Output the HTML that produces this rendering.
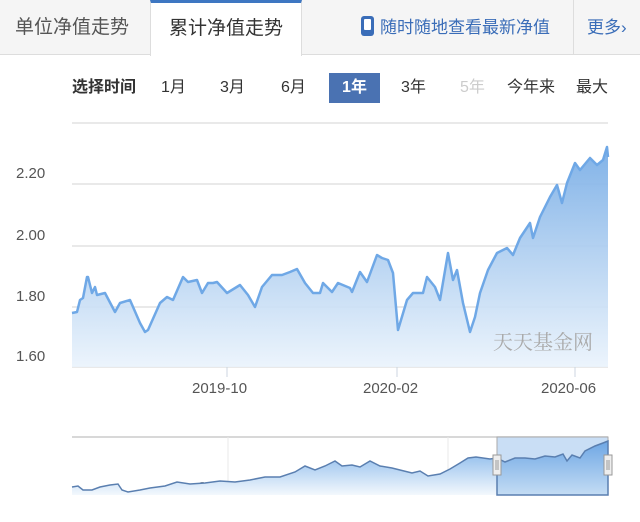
<!DOCTYPE html>
<html><head><meta charset="utf-8"><style>
body{margin:0;width:640px;height:522px;background:#fff;font-family:"Liberation Sans","Noto Sans CJK SC",sans-serif;overflow:hidden;position:relative}
.tabs{position:absolute;left:0;top:0;width:640px;height:55px;background:#f5f5f5;border-bottom:1px solid #ddd;box-sizing:border-box}
.t{position:absolute;top:0;height:55px;line-height:55px;font-size:19px;color:#555}
.act{left:150px;width:152px;background:#fff;border-top:3px solid #3e77c2;border-left:1px solid #ddd;border-right:1px solid #ddd;box-sizing:border-box;height:56px;line-height:52px;text-align:center;color:#333}
.blue{color:#3a6db8;font-size:17px}
.row{position:absolute;top:73px;height:30px;line-height:30px;font-size:16px;color:#333}
.sel{background:#4a72b2;color:#fff;font-weight:bold;text-align:center}
.yl{position:absolute;left:16px;font-size:15px;color:#555}
.xl{position:absolute;top:380px;font-size:15px;color:#555}
</style></head><body>
<div class="tabs">
<div class="t" style="left:15px">单位净值走势</div>
<div class="t act">累计净值走势</div>
<div class="t blue" style="left:361px"><span style="display:inline-block;width:13px;height:20px;background:#3a6db8;border-radius:3px;vertical-align:-3px;margin-right:6px;position:relative"><span style="position:absolute;left:3px;top:3px;width:7px;height:11px;background:#fff;border-radius:1px"></span></span>随时随地查看最新净值</div>
<div style="position:absolute;left:573px;top:0;height:55px;border-left:1px solid #ddd"></div>
<div class="t blue" style="left:587px">更多›</div>
</div>
<div class="row" style="left:72px;font-weight:bold">选择时间</div>
<div class="row" style="left:161px">1月</div>
<div class="row" style="left:220px">3月</div>
<div class="row" style="left:281px">6月</div>
<div class="row sel" style="left:329px;width:51px">1年</div>
<div class="row" style="left:401px">3年</div>
<div class="row" style="left:460px;color:#ccc">5年</div>
<div class="row" style="left:507px">今年来</div>
<div class="row" style="left:576px">最大</div>

<svg style="position:absolute;left:0;top:0" width="640" height="522">
<defs>
<linearGradient id="g" x1="0" y1="0" x2="0" y2="1"><stop offset="0" stop-color="#7aaee6" stop-opacity=".95"/><stop offset="1" stop-color="#eaf3fc" stop-opacity=".9"/></linearGradient>
<linearGradient id="g2" x1="0" y1="0" x2="0" y2="1"><stop offset="0" stop-color="#9cc4ee"/><stop offset="1" stop-color="#f3f8fd"/></linearGradient>
<linearGradient id="g3" x1="0" y1="0" x2="0" y2="1"><stop offset="0" stop-color="#6ea6e4"/><stop offset="1" stop-color="#c4dcf4"/></linearGradient>
</defs>
<g stroke="#e2e2e2" stroke-width="1.5">
<line x1="72" y1="123" x2="608" y2="123"/><line x1="72" y1="184" x2="608" y2="184"/><line x1="72" y1="246" x2="608" y2="246"/><line x1="72" y1="307" x2="608" y2="307"/><line x1="72" y1="367" x2="608" y2="367"/>
</g>
<g stroke="#ccd6e0"><line x1="227" y1="367" x2="227" y2="377"/><line x1="397" y1="367" x2="397" y2="377"/><line x1="575" y1="367" x2="575" y2="377"/></g>
<path fill="url(#g)" stroke="none" d="M72,313 L77,312 80,300 83,298 87,277 88,277 92,293 95,287 97,295 105,293 115,312 120,303 130,300 140,323 145,332 148,330 160,303 167,297 173,300 183,277 188,282 197,280 202,293 208,283 213,283 217,282 227,293 240,285 248,295 255,307 262,287 272,275 282,275 290,272 297,269 305,283 313,293 320,293 323,283 332,292 338,283 350,288 352,292 360,272 367,282 377,255 382,258 388,260 393,273 398,330 407,300 413,293 423,293 427,277 435,287 440,300 448,253 453,280 457,270 463,303 470,332 475,317 480,293 488,270 497,253 507,248 513,255 520,238 530,223 533,238 540,217 550,197 557,185 562,203 567,183 575,163 580,170 590,158 597,165 603,160 607,147 608,157 L608,367 L72,367Z"/>
<path fill="none" stroke="#6fa8e6" stroke-width="2.5" stroke-linejoin="round" d="M72,313 L77,312 80,300 83,298 87,277 88,277 92,293 95,287 97,295 105,293 115,312 120,303 130,300 140,323 145,332 148,330 160,303 167,297 173,300 183,277 188,282 197,280 202,293 208,283 213,283 217,282 227,293 240,285 248,295 255,307 262,287 272,275 282,275 290,272 297,269 305,283 313,293 320,293 323,283 332,292 338,283 350,288 352,292 360,272 367,282 377,255 382,258 388,260 393,273 398,330 407,300 413,293 423,293 427,277 435,287 440,300 448,253 453,280 457,270 463,303 470,332 475,317 480,293 488,270 497,253 507,248 513,255 520,238 530,223 533,238 540,217 550,197 557,185 562,203 567,183 575,163 580,170 590,158 597,165 603,160 607,147 608,157"/>
<text x="493" y="349" font-size="20" fill="#aaa" font-family="Liberation Serif,Noto Serif CJK SC,serif">天天基金网</text>
<line x1="72" y1="437" x2="608" y2="437" stroke="#ccc" stroke-width="1.5"/>
<g stroke="#e8e8e8"><line x1="228" y1="437" x2="228" y2="495"/><line x1="448" y1="437" x2="448" y2="495"/></g>
<text x="198" y="492" font-size="15" fill="#888">2017-01</text>
<text x="418" y="492" font-size="15" fill="#888">2019-01</text>
<path fill="url(#g2)" d="M72,487 L78,486 83,490 92,490 100,487 110,485 118,484 122,490 128,492 140,490 150,488 165,486 177,482 190,484 205,483 220,481 235,482 250,480 265,477 280,477 295,472 305,466 315,470 325,466 335,461 342,466 352,465 360,467 370,461 380,466 392,468 400,470 412,473 420,471 428,476 440,474 450,469 460,463 468,458 476,457 490,459 497,458 L497,495 72,495Z"/>
<path fill="none" stroke="#5a7fb0" stroke-width="1.5" d="M72,487 L78,486 83,490 92,490 100,487 110,485 118,484 122,490 128,492 140,490 150,488 165,486 177,482 190,484 205,483 220,481 235,482 250,480 265,477 280,477 295,472 305,466 315,470 325,466 335,461 342,466 352,465 360,467 370,461 380,466 392,468 400,470 412,473 420,471 428,476 440,474 450,469 460,463 468,458 476,457 490,459 497,458"/>
<rect x="497" y="437" width="111" height="58" fill="#c9def5" stroke="#aaa"/>
<path fill="url(#g3)" stroke="#5a7fb0" stroke-width="1.5" d="M497,458 L505,462 515,458 525,458 535,459 545,456 555,457 563,454 567,461 572,455 580,458 585,451 595,446 603,443 608,441 L608,495 497,495Z"/>
<rect x="493" y="455" width="8" height="20" fill="#eee" stroke="#999"/>
<rect x="604" y="455" width="8" height="20" fill="#eee" stroke="#999"/>
<g stroke="#999"><line x1="496" y1="460" x2="496" y2="470"/><line x1="498" y1="460" x2="498" y2="470"/><line x1="607" y1="460" x2="607" y2="470"/><line x1="609" y1="460" x2="609" y2="470"/></g>
</svg>
<div class="yl" style="top:165px">2.20</div>
<div class="yl" style="top:227px">2.00</div>
<div class="yl" style="top:288px">1.80</div>
<div class="yl" style="top:348px">1.60</div>
<div class="xl" style="left:192px">2019-10</div>
<div class="xl" style="left:363px">2020-02</div>
<div class="xl" style="left:541px">2020-06</div>
</body></html>
